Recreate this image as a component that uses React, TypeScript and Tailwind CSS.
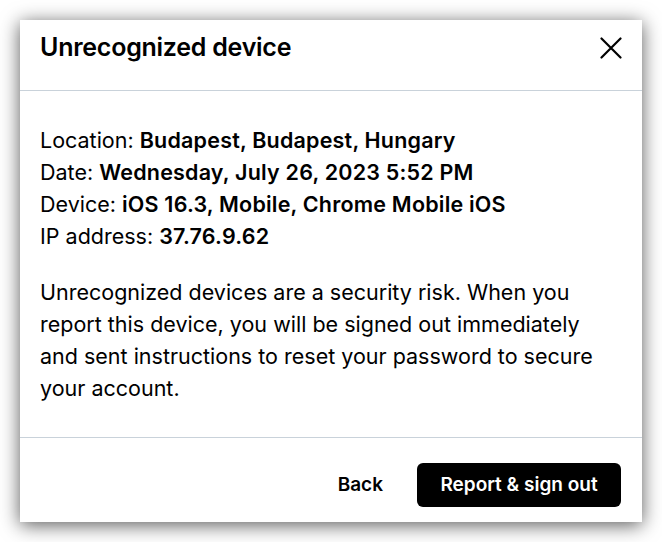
import React from "react";

export default function App() {
  return (
    <div
      className="w-[662px] h-[542px] bg-white p-5"
      style={{ fontFamily: "Inter, 'Noto Sans', sans-serif" }}
    >
      <div className="w-[622px] h-[502px] bg-white shadow-[0_3px_18px_rgba(0,0,0,0.65)] flex flex-col text-black">
        <div className="h-[71px] shrink-0 border-b border-[#c9d2da]">
          <div className="h-[55px] flex items-center justify-between pl-5 pr-5">
            <h1 className="text-[25px] font-semibold tracking-[-0.25px] leading-none">Unrecognized device</h1>
            <button className="w-[22px] h-[22px] flex items-center justify-center">
              <svg width="22" height="22" viewBox="0 0 22 22" fill="none" stroke="black" strokeWidth="2.2" strokeLinecap="round">
                <path d="M1.5 1.5L20.5 20.5M20.5 1.5L1.5 20.5" />
              </svg>
            </button>
          </div>
        </div>
        <div className="h-[347px] shrink-0 px-5 pt-[33px] text-[21.5px] leading-8 border-b border-[#c9d2da]">
          <div>
            <p>Location: <span className="font-semibold tracking-[0.2px]">Budapest, Budapest, Hungary</span></p>
            <p>Date: <span className="font-semibold tracking-[0.2px]">Wednesday, July 26, 2023 5:52 PM</span></p>
            <p>Device: <span className="font-semibold tracking-[0.2px]">iOS 16.3, Mobile, Chrome Mobile iOS</span></p>
            <p>IP address: <span className="font-semibold tracking-[0.2px]">37.76.9.62</span></p>
          </div>
          <p className="mt-6 whitespace-nowrap">
            Unrecognized devices are a security risk. When you
            <br />
            report this device, you will be signed out immediately
            <br />
            and sent instructions to reset your password to secure
            <br />
            your account.
          </p>
        </div>
        <div className="flex-1 flex items-start justify-end gap-[34px] pt-[25px] pr-[21px]">
          <button className="h-11 text-[19px] font-semibold">Back</button>
          <button className="h-11 w-[204px] rounded-md bg-black text-white text-[19px] font-semibold">
            Report &amp; sign out
          </button>
        </div>
      </div>
    </div>
  );
}
